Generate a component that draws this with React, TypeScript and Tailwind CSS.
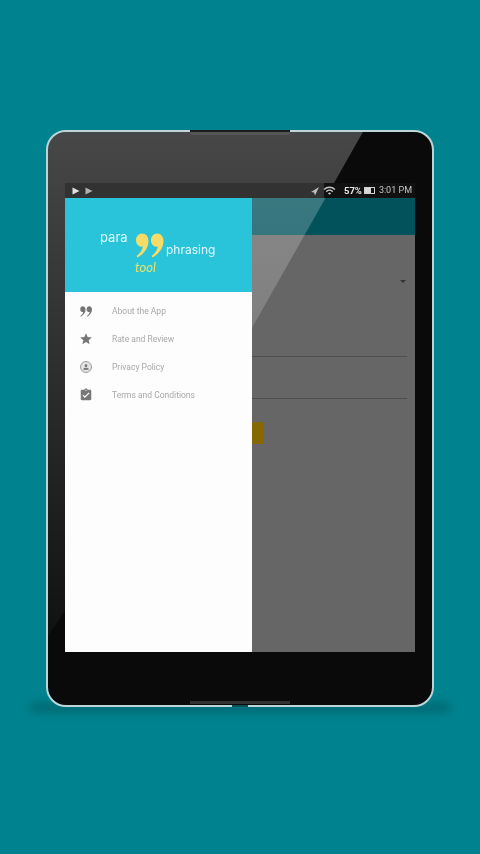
import { MdAssignmentTurnedIn, MdPerson, MdStar, MdWifi } from "react-icons/md";

const menuItems = ["About the App", "Rate and Review", "Privacy Policy", "Terms and Conditions"];

function QuoteMark({ className, fill }: { className: string; fill: string }) {
    return (
        <svg viewBox="0 0 28 25" className={className} fill={fill}>
            <path d="M6.500 0.500C10.500 0.500 13 3.500 13 8C13 15 8.500 21 2 24.500L1 23C4.500 20.500 6.500 17.500 7.500 13.500C3.500 14.500 0.500 11.500 0.500 7C0.500 3.500 3 0.500 6.500 0.500Z" />
            <path d="M21.500 0.500C25.500 0.500 28 3.500 28 8C28 15 23.500 21 17 24.500L16 23C19.500 20.500 21.500 17.500 22.500 13.500C18.500 14.500 15.500 11.500 15.500 7C15.500 3.500 18 0.500 21.500 0.500Z" />
        </svg>
    );
}

function MenuIcon({ index }: { index: number }) {
    if (index === 0) return <QuoteMark className="h-[11px] w-[12px]" fill="#757575" />;
    if (index === 1) return <MdStar className="text-[14px] text-[#777777]" />;
    if (index === 2) {
        return (
            <span className="flex h-[12px] w-[12px] items-center justify-center rounded-full border border-[#a0a0a0] bg-[#e2e2e2]">
                <MdPerson className="text-[8px] text-[#757575]" />
            </span>
        );
    }
    return <MdAssignmentTurnedIn className="text-[14px] text-[#777777]" />;
}

function StatusBar() {
    return (
        <div className="z-20 flex h-[15px] items-center justify-between bg-[linear-gradient(90deg,#323232_74%,#111111_74%)] pl-[7px] pr-[3px]">
            <div className="flex items-center gap-[5px] blur-[0.3px]">
                <svg viewBox="0 0 8 8" className="h-[8px] w-[8px]" fill="#e0e0e0">
                    <path d="M0.500 0.500L7.500 4L0.500 7.500Z" />
                </svg>
                <svg viewBox="0 0 8 8" className="h-[8px] w-[8px]" fill="#b0b0b0">
                    <path d="M0.500 0.500L7.500 4L0.500 7.500Z" />
                </svg>
            </div>
            <div className="flex items-center font-['Roboto',sans-serif] text-[9px] leading-none blur-[0.3px]">
                <svg viewBox="0 0 10 10" className="h-[10px] w-[10px]" fill="#bdbdbd">
                    <path d="M9 1L1 6L4 6.500L5 9.500Z" />
                </svg>
                <MdWifi className="ml-[3px] text-[13px] text-[#c4c4c4]" />
                <span className="ml-[8px] text-[9.500px] font-bold text-[#e6e6e6]">57%</span>
                <span className="ml-[2px] flex h-[7px] w-[11px] items-center border border-[#d0d0d0]">
                    <span className="h-full w-[6px] bg-[#d8d8d8]" />
                </span>
                <span className="ml-[4px] text-[#c4c4c4]">3:01 PM</span>
            </div>
        </div>
    );
}

function Drawer() {
    return (
        <div className="z-20 flex w-[187px] flex-col bg-[#fdfdfd]">
            <div className="h-[94px] bg-[#29c3da] pl-[35px] pt-[35px] blur-[0.4px]">
                <div className="flex items-start">
                    <span className="mt-[-3px] w-[35px] font-['Inter',sans-serif] text-[13px] leading-[14px] text-[#e2fbff]">
                        para
                    </span>
                    <QuoteMark className="h-[25px] w-[29px]" fill="#f6dc67" />
                    <span className="ml-[2px] mt-[10px] font-['Inter',sans-serif] text-[12px] leading-[14px] text-[#e2fbff]">
                        phrasing
                    </span>
                </div>
                <div className="ml-[35px] mt-[2px] font-['Lato',sans-serif] text-[13px] italic leading-[15px] text-[#e6e26c]">
                    tool
                </div>
            </div>
            <div className="flex flex-col pt-[5px]">
                {menuItems.map((item, i) => (
                    <div key={item} className="flex h-[28px] items-center">
                        <div className="flex w-[41px] justify-center pl-[1px]">
                            <MenuIcon index={i} />
                        </div>
                        <span className="ml-[6px] mt-[1px] font-['Roboto',sans-serif] text-[8.500px] text-[#a8a8a8] blur-[0.3px]">
                            {item}
                        </span>
                    </div>
                ))}
            </div>
        </div>
    );
}

function ScrimContent() {
    return (
        <div className="flex flex-1 flex-col bg-[#666666]">
            <div className="h-[37px] bg-[#02525c]" />
            <div className="mr-[8px] flex h-[122px] justify-end border-b border-[#4f4f4f] pr-[1px] pt-[45px]">
                <span className="h-0 w-0 border-x-[3px] border-t-[3px] border-x-transparent border-t-[#333333]" />
            </div>
            <div className="mr-[8px] h-[42px] border-b border-[#4f4f4f]" />
            <div className="mt-[23px] h-[22px] w-[12px] bg-[#866700]" />
        </div>
    );
}

export default function App() {
    return (
        <div className="flex h-[854px] w-[480px] flex-col items-center bg-[#00838f] pt-[130px]">
            <div className="relative z-10 h-[577px] w-[388px]">
                <div className="relative h-full overflow-hidden rounded-[20px] border-2 border-[#bcd5d9] bg-[#0a0a0a] px-[17px] pt-[51px]">
                    <div className="absolute bottom-[1px] left-[142px] h-[3px] w-[100px] bg-[#333333]" />
                    <div className="flex h-[469px] flex-col">
                        <StatusBar />
                        <div className="flex flex-1">
                            <Drawer />
                            <ScrimContent />
                        </div>
                    </div>
                    <div className="pointer-events-none absolute inset-0 z-10 bg-gradient-to-b from-[#ffffff40] to-[#ffffff00] [clip-path:polygon(0_0,82%_0,52%_35.500%,0_88%)]" />
                </div>
                <div className="absolute left-[144px] top-0 h-[5px] w-[100px] rounded-b-[2px] bg-[#1c1c1c]" />
                <div className="absolute bottom-0 left-[186px] h-[2px] w-[16px] bg-[#0b4f5a]" />
            </div>
            <div className="mt-[-4px] h-[9px] w-[420px] rounded-full bg-[#00000038] blur-[5px]" />
        </div>
    );
}
